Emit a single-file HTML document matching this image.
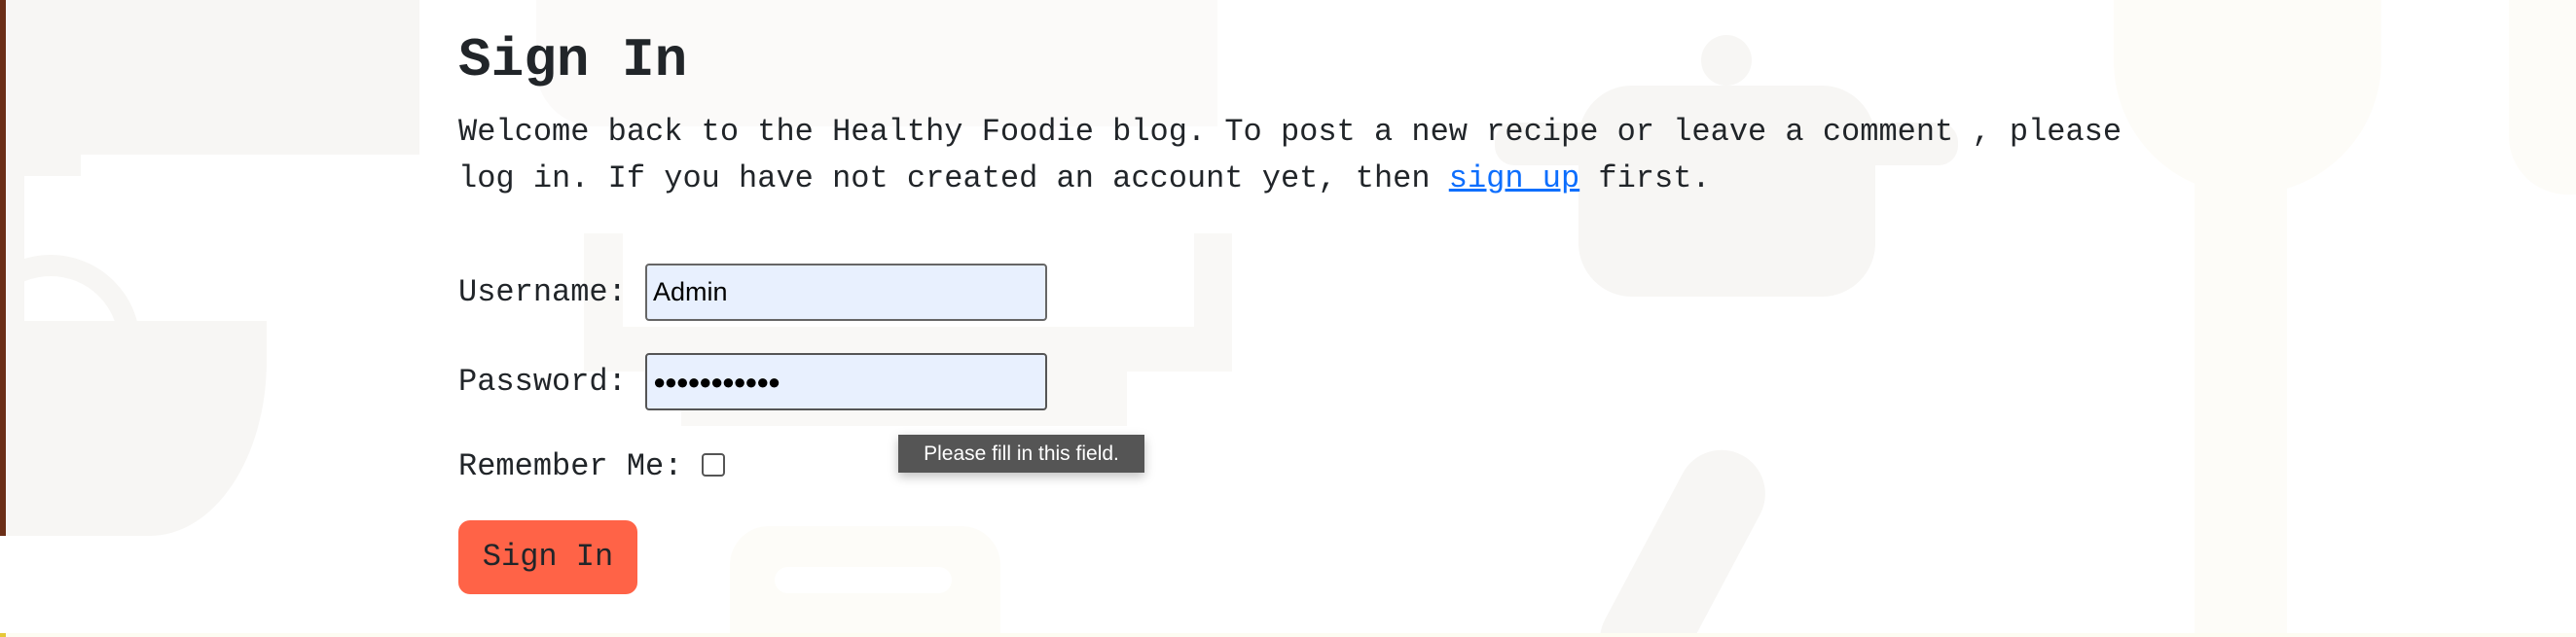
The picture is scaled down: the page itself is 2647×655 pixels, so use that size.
<!DOCTYPE html>
<html><head><meta charset="utf-8"><style>
html,body{margin:0;padding:0;width:2647px;height:655px;overflow:hidden;background:#fff;font-family:"Liberation Mono",monospace;color:#212529}
#w{position:relative;width:2647px;height:655px;overflow:hidden}
.s{position:absolute;background:#f7f6f4}
.c{position:absolute;background:#fdfcf8}
.t{position:absolute;white-space:nowrap}
input.f{position:absolute;box-sizing:border-box;width:413px;height:59px;border:2px solid #666;border-radius:4px;background:#e8f0fe;font-family:"Liberation Sans",sans-serif;font-size:27px;padding:0 6px;color:#000;margin:0}
</style></head><body><div id="w">
<div class="s" style="left:0;top:0;width:431px;height:159px"></div>
<div class="s" style="left:0;top:159px;width:83px;height:22px"></div>
<div class="s" style="left:6px;top:181px;width:19px;height:150px"></div>
<div style="position:absolute;left:-40px;top:262px;width:140px;height:140px;border:22px solid #f7f6f4;border-radius:50%;clip-path:inset(0 0 60% 0)"></div>
<div class="s" style="left:0;top:330px;width:274px;height:221px;border-bottom-right-radius:120px 180px"></div>
<div class="s" style="left:551px;top:0;width:700px;height:130px;border-bottom-left-radius:60px;background:#fbfaf9"></div>
<div class="s" style="left:600px;top:240px;width:666px;height:142px;background:#f9f8f6"></div>
<div style="position:absolute;left:640px;top:240px;width:587px;height:96px;background:#fff"></div>
<div class="s" style="left:700px;top:382px;width:458px;height:56px;background:#f9f8f6"></div>
<div class="c" style="left:750px;top:541px;width:278px;height:120px;border-radius:40px 40px 0 0"></div>
<div style="position:absolute;left:796px;top:583px;width:182px;height:27px;border-radius:14px;background:#fff"></div>
<div class="s" style="left:1748px;top:36px;width:52px;height:52px;border-radius:50%"></div>
<div class="s" style="left:1536px;top:126px;width:476px;height:44px;border-radius:20px"></div>
<div class="s" style="left:1622px;top:88px;width:305px;height:217px;border-radius:55px"></div>
<div class="s" style="width:90px;height:260px;border-radius:45px;transform:rotate(28deg);transform-origin:50% 0;left:1745px;top:468px"></div>
<div class="c" style="left:2172px;top:0;width:275px;height:200px;border-radius:0 0 140px 140px"></div>
<div class="c" style="left:2255px;top:150px;width:95px;height:505px"></div>
<div class="c" style="left:2578px;top:0;width:69px;height:200px;border-bottom-left-radius:60px"></div>
<div style="position:absolute;left:0;top:0;width:6px;height:551px;background:#6b2e17"></div>
<div style="position:absolute;left:0;top:651px;width:2647px;height:4px;background:#fdfcf2"></div>
<div style="position:absolute;left:0;top:651px;width:6px;height:4px;background:#e6c838"></div>

<div class="t" style="left:471px;top:22px;font-size:56px;font-weight:bold;line-height:80px">Sign In</div>
<div class="t" style="left:471px;top:112px;font-size:32px;line-height:48px">Welcome back to the Healthy Foodie blog. To post a new recipe or leave a comment , please<br>log in. If you have not created an account yet, then <a href="#" style="color:#0d6efd;text-decoration:underline">sign up</a> first.</div>
<div class="t" style="left:471px;top:277px;font-size:32px;line-height:48px">Username:</div>
<input class="f" style="left:663px;top:271px" value="Admin">
<div class="t" style="left:471px;top:369px;font-size:32px;line-height:48px">Password:</div>
<div class="t" style="left:663px;top:363px;width:413px;height:59px;box-sizing:border-box;border:2px solid #555;border-radius:4px;background:#e8f0fe;font-family:'Liberation Sans',sans-serif;font-size:22px;line-height:55px;padding-left:6px;letter-spacing:-1.5px;color:#000">●●●●●●●●●●●</div>
<div class="t" style="left:471px;top:456px;font-size:32px;line-height:48px">Remember Me:</div>
<div style="position:absolute;left:721px;top:466px;width:20px;height:20px;border:2px solid #555;border-radius:4px;background:#fff"></div>
<div class="t" style="left:923px;top:447px;width:253px;height:39px;background:#555;color:#fff;font-family:'Liberation Sans',sans-serif;font-size:21px;line-height:39px;text-align:center;box-shadow:0 4px 10px rgba(0,0,0,.25)">Please fill in this field.</div>
<div class="t" style="left:471px;top:535px;width:184px;height:76px;background:#ff6347;border-radius:12px;font-size:32px;line-height:76px;text-align:center">Sign In</div>
</div></body></html>
